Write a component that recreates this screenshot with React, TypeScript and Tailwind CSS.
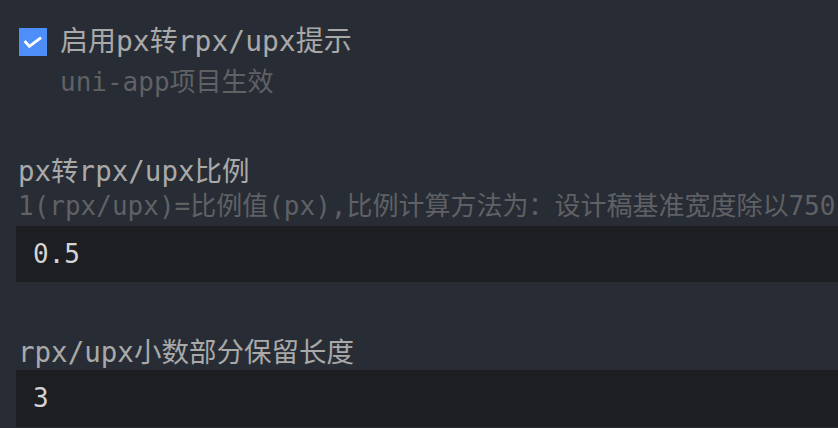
export default function App() {
  const font = { fontFamily: '"DejaVu Sans Mono", "Noto Sans CJK SC", monospace' };
  return (
    <div
      className="w-[838px] h-[428px] overflow-hidden bg-[#282c34] pl-4 pt-[28px]"
      style={font}
    >
      <div className="flex items-start gap-[13px] pl-[3px]">
        <div className="h-[28px] w-[28px] shrink-0 bg-[#4d8ef8]">
          <svg width="28" height="28" viewBox="0 0 28 28" fill="none">
            <path d="M5.6 13 L10.4 18.4 L22 9.6" stroke="#fff" strokeWidth="2.8" />
          </svg>
        </div>
        <div className="flex flex-col">
          <div className="text-[28px] leading-[28px] text-[#a9a9a9] whitespace-nowrap">启用px转rpx/upx提示</div>
          <div className="mt-[12px] text-[26px] leading-[28px] text-[#5f6165] whitespace-nowrap">
            uni-app项目生效
          </div>
        </div>
      </div>

      <div className="mt-[61px] pl-[2px] text-[27.5px] leading-[28px] text-[#a9a9a9] whitespace-nowrap">
        px转rpx/upx比例
      </div>
      <div className="mt-[7px] pl-[2px] text-[26px] leading-[28px] text-[#5f6165] whitespace-nowrap">
        1(rpx/upx)=比例值(px),比例计算方法为：设计稿基准宽度除以750
      </div>
      <div className="mt-[6px] flex h-[56px] items-center bg-[#1d1e22] pl-[17px] text-[26px] text-[#d4d4d4]">
        0.5
      </div>

      <div className="mt-[56px] pl-[2px] text-[27.5px] leading-[28px] text-[#a9a9a9] whitespace-nowrap">
        rpx/upx小数部分保留长度
      </div>
      <div className="mt-[4px] flex h-[57px] items-center bg-[#1d1e22] pl-[17px] text-[26px] text-[#d4d4d4]">
        3
      </div>
    </div>
  );
}
